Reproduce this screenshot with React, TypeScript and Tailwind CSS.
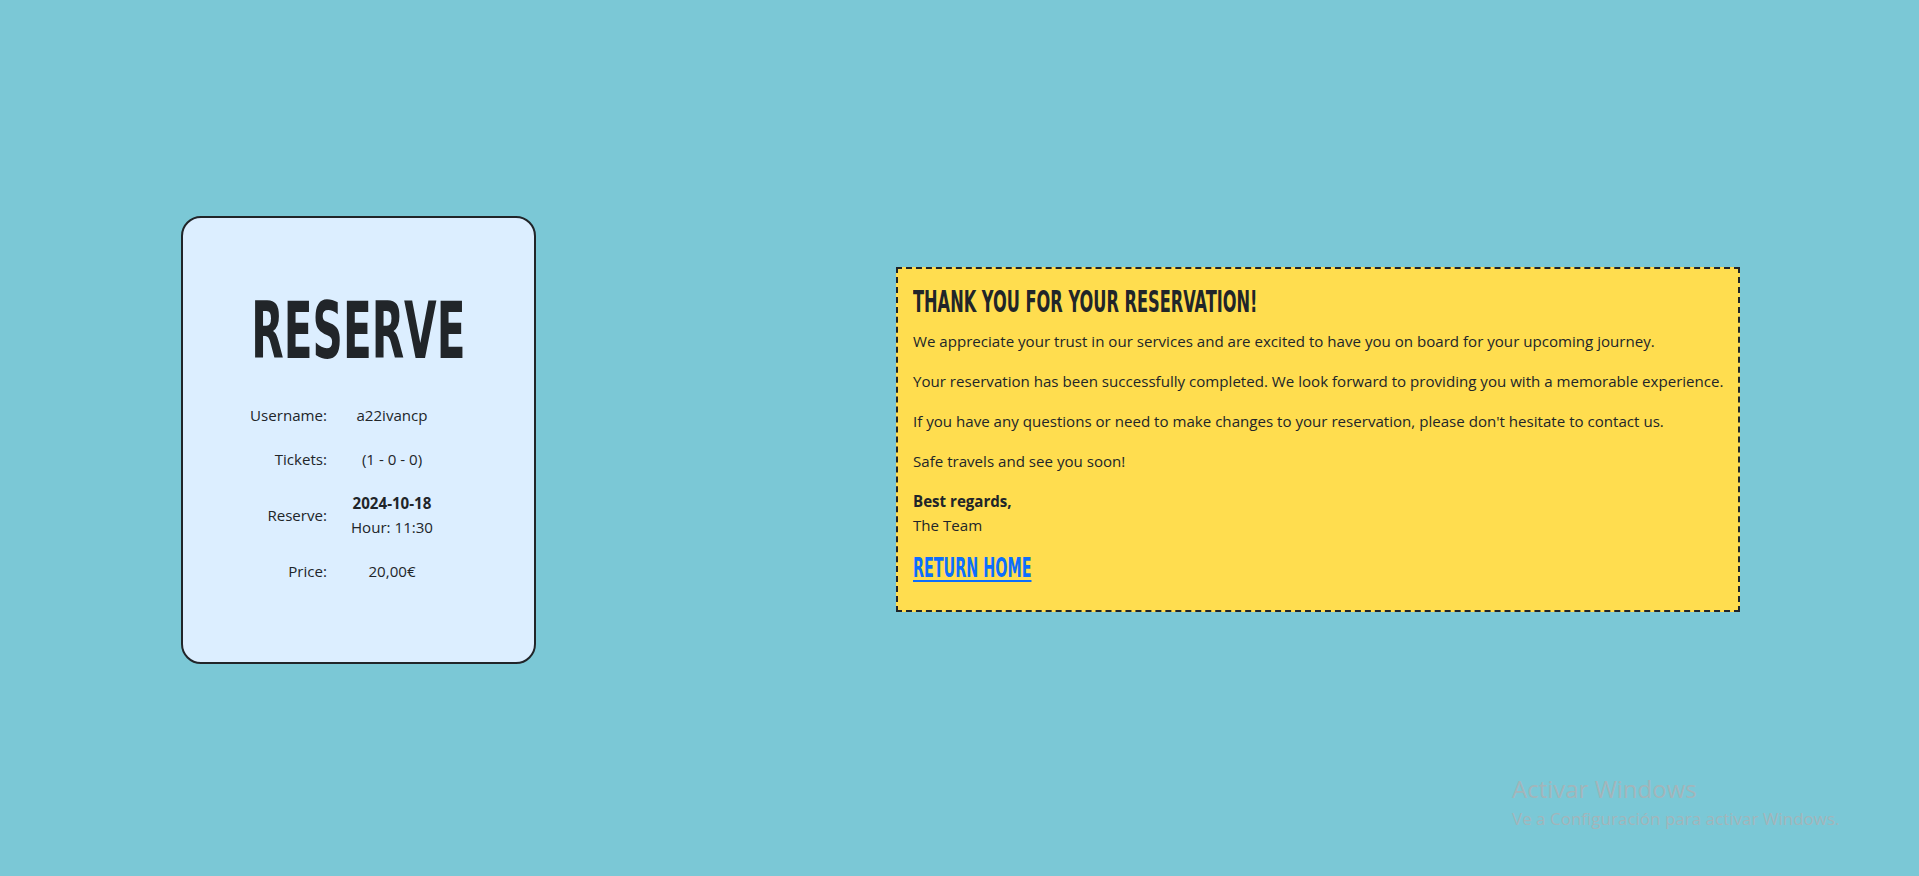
import React from "react";

const rows: { label: string; value: React.ReactNode; tall?: boolean }[] = [
  { label: "Username:", value: "a22ivancp" },
  { label: "Tickets:", value: "(1 - 0 - 0)" },
  {
    label: "Reserve:",
    value: (
      <>
        <span className="block font-bold">2024-10-18</span>
        <span className="block">Hour: 11:30</span>
      </>
    ),
    tall: true,
  },
  { label: "Price:", value: "20,00€" },
];

function ReserveCard() {
  return (
    <div className="box-border flex h-[448px] w-[355px] flex-col rounded-[20px] border-2 border-[#212529] bg-[#dceeff] pt-[75px]">
      <div className="flex h-[77px] justify-center">
        <h1 className="inline-block scale-x-[0.6] whitespace-nowrap text-[78px] leading-[77px] font-bold font-stretch-condensed text-[#212529] [font-family:'DejaVu_Sans_Condensed','DejaVu_Sans',sans-serif]">
          RESERVE
        </h1>
      </div>
      <div className="mt-[23px] grid grid-cols-[144px_130px] text-[15.1px] leading-[24px] text-[#212529]">
        {rows.map((r) => (
          <React.Fragment key={r.label}>
            <div className={`flex items-center justify-end ${r.tall ? "h-[68px]" : "h-[44px]"}`}>{r.label}</div>
            <div className={`flex flex-col items-center justify-center text-center ${r.tall ? "h-[68px]" : "h-[44px]"}`}>{r.value}</div>
          </React.Fragment>
        ))}
      </div>
    </div>
  );
}

function ThankYou() {
  return (
    <div className="box-border w-[844px] border-2 border-dashed border-[#212529] bg-[#ffdd4f] pl-[15px] pr-[10px] pt-[14px] pb-[15px] text-[15.1px] leading-[24px] text-[#212529]">
      <h2 className="mb-[8px] h-[38px] origin-left scale-x-[0.6] whitespace-nowrap text-[30px] leading-[38px] font-bold font-stretch-condensed [font-family:'DejaVu_Sans_Condensed','DejaVu_Sans',sans-serif]">
        THANK YOU FOR YOUR RESERVATION!
      </h2>
      <p className="mb-[16px]">We appreciate your trust in our services and are excited to have you on board for your upcoming journey.</p>
      <p className="mb-[16px]">Your reservation has been successfully completed. We look forward to providing you with a memorable experience.</p>
      <p className="mb-[16px]">If you have any questions or need to make changes to your reservation, please don't hesitate to contact us.</p>
      <p className="mb-[16px]">Safe travels and see you soon!</p>
      <p className="mb-[16px]">
        <span className="font-bold">Best regards,</span>
        <br />
        The Team
      </p>
      <h3 className="mb-[12px] h-[30px]">
        <a
          href="#"
          className="inline-block origin-left scale-x-[0.59] whitespace-nowrap text-[27px] leading-[30px] font-bold font-stretch-condensed text-[#0d6efd] underline decoration-2 underline-offset-[3px] [font-family:'DejaVu_Sans_Condensed','DejaVu_Sans',sans-serif]"
        >
          RETURN HOME
        </a>
      </h3>
    </div>
  );
}

export default function App() {
  return (
    <div className="relative min-h-screen overflow-hidden bg-[#7bc8d6] pt-[3px] [font-family:'Open_Sans',sans-serif]">
      <div className="grid min-h-[873px] grid-cols-[717px_1fr] items-center">
        <div className="flex justify-center">
          <ReserveCard />
        </div>
        <div className="flex justify-center">
          <ThankYou />
        </div>
      </div>
      <div className="pointer-events-none absolute left-[1512px] top-[777px] flex flex-col gap-[9px] whitespace-nowrap text-[#a3b5ba]">
        <span className="text-[24px] leading-[24px]">Activar Windows</span>
        <span className="text-[17px] leading-[17px]">Ve a Configuración para activar Windows.</span>
      </div>
    </div>
  );
}
